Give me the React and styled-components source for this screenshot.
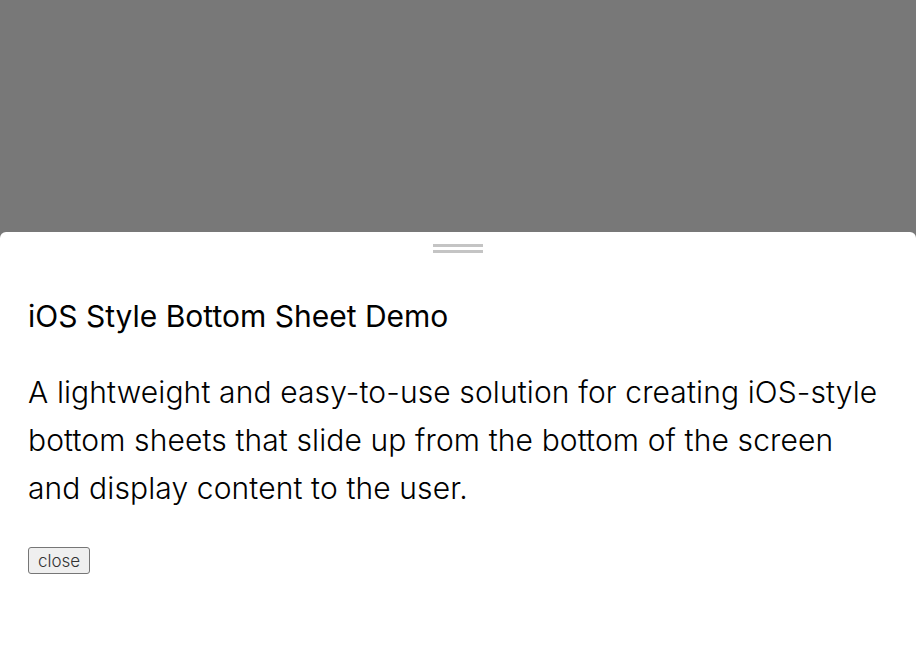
import React from "react";
import styled, { createGlobalStyle } from "styled-components";

const GlobalStyle = createGlobalStyle`
  html, body {
    margin: 0;
    padding: 0;
    height: 100%;
    font-family: Inter, "Noto Sans", sans-serif;
  }
  #root {
    height: 100%;
  }
`;

const Overlay = styled.div`
  position: fixed;
  inset: 0;
  background-color: #787878;
  display: flex;
  flex-direction: column;
  justify-content: flex-end;
`;

const Sheet = styled.div`
  height: 416px;
  background-color: #fff;
  border-radius: 6px 6px 0 0;
  display: flex;
  flex-direction: column;
`;

const Header = styled.div`
  display: flex;
  justify-content: center;
  padding: 12px 0 0;
`;

const DragIcon = styled.span`
  width: 50px;
  height: 9px;
  box-sizing: border-box;
  border-top: 3px solid #c4c4c4;
  border-bottom: 3px solid #c4c4c4;
`;

const Body = styled.div`
  padding: 0 28px;
`;

const Title = styled.h2`
  margin: 45px 0 0;
  font-size: 30px;
  font-weight: 400;
  color: #000;
`;

const Text = styled.p`
  margin: 34px 0 0;
  font-size: 30px;
  font-weight: 300;
  line-height: 48px;
  letter-spacing: 0.12px;
  color: #000;
`;

const CloseButton = styled.button`
  margin-top: 35px;
  font-family: Inter, sans-serif;
  font-size: 17px;
  font-weight: 300;
  padding: 3px 9px 2px;
  border: 1px solid #767676;
  border-radius: 3px;
  background: #efefef;
  color: #333;
`;

export default function App() {
  return (
    <>
      <GlobalStyle />
      <Overlay>
        <Sheet>
          <Header>
            <DragIcon />
          </Header>
          <Body>
            <Title>iOS Style Bottom Sheet Demo</Title>
            <Text>
              A lightweight and easy-to-use solution for creating iOS-style
              bottom sheets that slide up from the bottom of the screen and
              display content to the user.
            </Text>
            <CloseButton>close</CloseButton>
          </Body>
        </Sheet>
      </Overlay>
    </>
  );
}
